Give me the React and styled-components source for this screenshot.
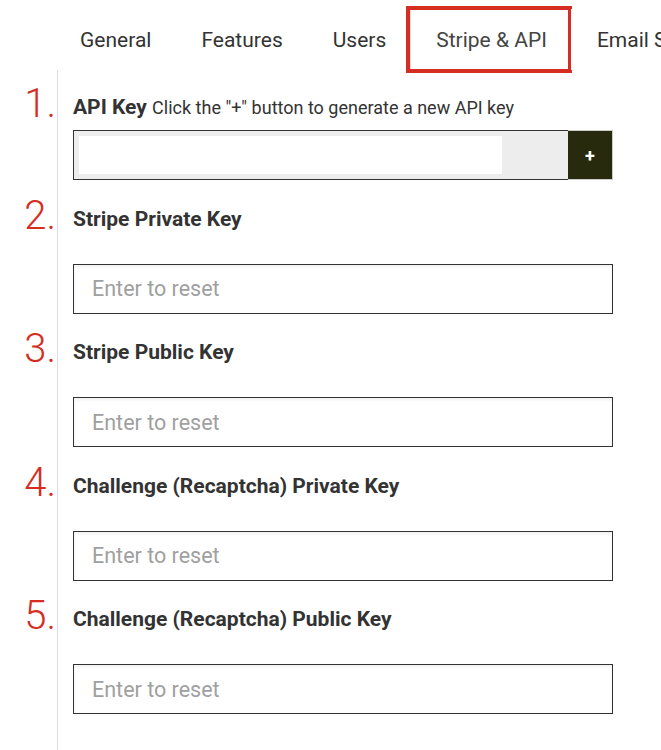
import React from "react";
import styled, { createGlobalStyle } from "styled-components";

const tabs = ["General", "Features", "Users", "Stripe & API", "Email Settings"];

const keyFields = [
  { id: 2, label: "Stripe Private Key" },
  { id: 3, label: "Stripe Public Key" },
  { id: 4, label: "Challenge (Recaptcha) Private Key" },
  { id: 5, label: "Challenge (Recaptcha) Public Key" },
];

const App = () => {
  return (
    <>
      <GlobalStyle />
      <Page>
        <TabBar>
          {tabs.map((tab) => (
            <Tab key={tab} $active={tab === "Stripe & API"}>
              {tab}
            </Tab>
          ))}
        </TabBar>
        <Panel>
          <Field>
            <Step>1.</Step>
            <Label $gap={10}>
              API Key <Hint>Click the "+" button to generate a new API key</Hint>
            </Label>
            <KeyRow>
              <KeyWell>
                <KeyValue type="text" readOnly />
              </KeyWell>
              <PlusButton type="button">+</PlusButton>
            </KeyRow>
          </Field>
          {keyFields.map((field) => (
            <Field key={field.id}>
              <Step>{field.id}.</Step>
              <Label $gap={33}>{field.label}</Label>
              <TextInput type="text" placeholder="Enter to reset" />
            </Field>
          ))}
        </Panel>
      </Page>
    </>
  );
};

export default App;

const GlobalStyle = createGlobalStyle`
  * { box-sizing: border-box; }
  html, body {
    margin: 0;
    background: #fff;
    font-family: Roboto, "Liberation Sans", sans-serif;
    color: #333;
  }
`;

const Page = styled.div`
  width: 661px;
  height: 750px;
  overflow: hidden;
  padding-left: 57px;
`;

const TabBar = styled.ul`
  display: flex;
  margin: 0 0 0 -3px;
  padding: 9px 0 0;
  list-style: none;
  white-space: nowrap;
`;

const Tab = styled.li`
  position: relative;
  flex-shrink: 0;
  padding: 18px 23px 18px 25px;
  font-size: 21px;
  line-height: 24px;
  color: ${(p) => (p.$active ? "#444" : "#333")};
  background: #fff;
  border: 1px solid ${(p) => (p.$active ? "#ddd" : "transparent")};
  border-bottom: none;
  margin-bottom: -1px;
  z-index: 1;

  &::after {
    content: "";
    display: ${(p) => (p.$active ? "block" : "none")};
    position: absolute;
    inset: -4px -2px -3px -5px;
    border: 4px solid #d52d22;
  }
`;

const Panel = styled.div`
  border-left: 1px solid #ddd;
  border-top: 1px solid #ddd;
  padding: 25px 0 40px 15px;
  min-height: 700px;
`;

const Field = styled.div`
  position: relative;
  width: 540px;
  & + & {
    margin-top: 26.5px;
  }
`;

const Step = styled.span`
  position: absolute;
  right: calc(100% + 17px);
  top: -11px;
  font-size: 40px;
  line-height: 40px;
  font-weight: 300;
  color: #d52d22;
`;

const Label = styled.div`
  font-size: 21px;
  line-height: 24px;
  font-weight: 700;
  color: #333;
  margin-bottom: ${(p) => p.$gap}px;
`;

const Hint = styled.span`
  font-size: 18px;
  font-weight: 400;
`;

const KeyRow = styled.div`
  display: flex;
  height: 50px;
`;

const KeyWell = styled.div`
  flex: 1;
  display: flex;
  padding: 5px 66px 5px 5px;
  background: #ededed;
  border: 1px solid #333;
  border-right: none;
`;

const KeyValue = styled.input`
  flex: 1;
  border: none;
  outline: none;
  background: #fff;
`;

const PlusButton = styled.button`
  width: 45px;
  border: 1px solid #ccc;
  border-left: none;
  background: #272a0c;
  color: #fff;
  font-family: Roboto, "Liberation Sans", sans-serif;
  font-size: 18px;
  font-weight: 700;
  padding: 0;
`;

const TextInput = styled.input`
  display: block;
  width: 100%;
  height: 50px;
  padding: 0 18px;
  border: 1px solid #333;
  border-radius: 0;
  box-shadow: inset 0 2px 3px rgba(0, 0, 0, 0.06);
  font-family: Roboto, "Liberation Sans", sans-serif;
  font-size: 21.5px;
  color: #333;
  outline: none;

  &::placeholder {
    color: #a0a0a0;
  }
`;
